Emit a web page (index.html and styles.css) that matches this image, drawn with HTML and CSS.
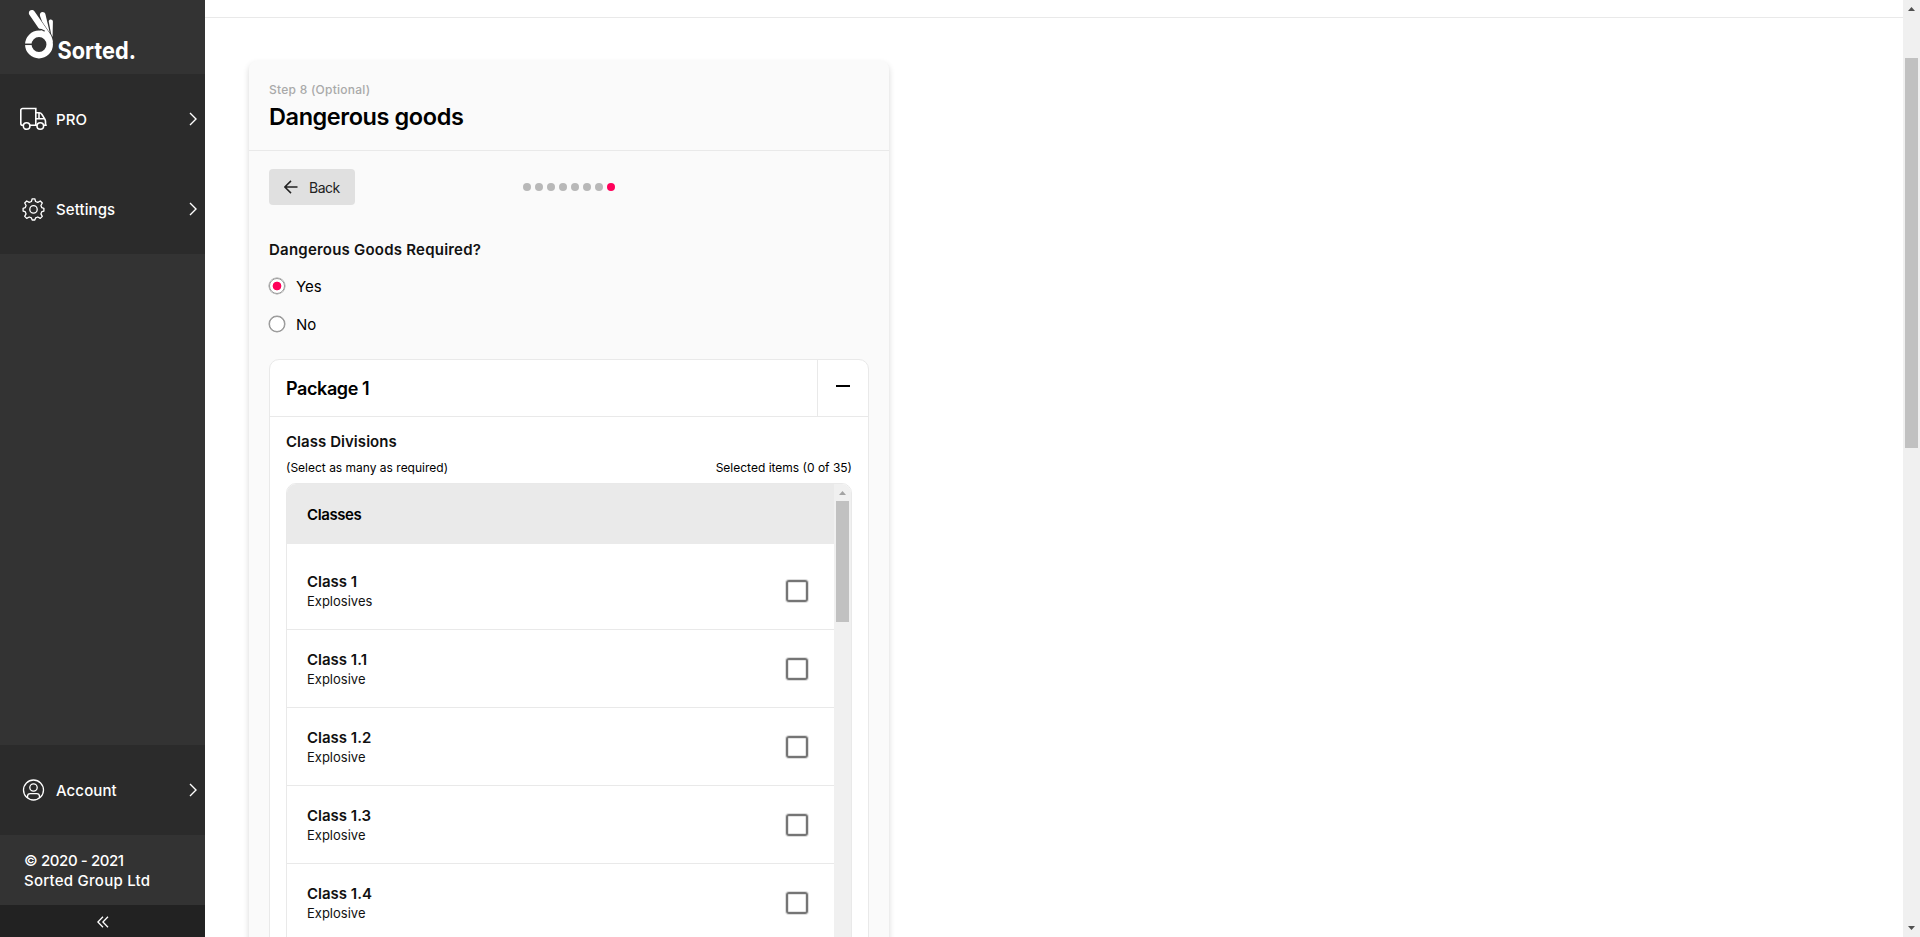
FILE: index.html
```html
<!DOCTYPE html>
<html lang="en">
<head>
    <meta charset="UTF-8">
    <title>Sorted - Dangerous goods</title>
    <link rel="stylesheet" href="styles.css">
</head>
<body>
    <nav class="sidebar">
        <div class="logo">
            <svg width="120" height="62" viewBox="0 0 120 62">
                <circle cx="15" cy="34.5" r="10.7" fill="none" stroke="#fff" stroke-width="6.5"/>
                <path d="M0 34.300h8" stroke="#333" stroke-width="1.500"/>
                <path d="M5.200 4.600C3.500 .8 8.200-1.800 10.600 1.600L25.500 23c2.300 3.200 3.200 6 3.300 9.500l-4.800-5.500-4-5.500c-2.600-.4-3.900-.9-5.200-3z" fill="#fff"/>
                <path d="M16 6c-1.200-4.400 4.500-5.500 5.500-1.500l4.300 18.300-7.600-11z" fill="#fff"/>
                <path d="M24.700 11.300c.2-2.600 4.300-2.500 4.200.2l-.3 15.500-1.600-3.500z" fill="#fff"/>
                <path d="M10.500 19.500c4-.9 7-.5 10.300 1.600" fill="none" stroke="#333" stroke-width="1.100"/>
                <text class="logo-text" x="33.500" y="48.800" textLength="78.500" lengthAdjust="spacingAndGlyphs">Sorted.</text>
            </svg>
        </div>
        <a class="nav-item">
            <svg class="nav-icon" width="28" height="24" viewBox="0 0 28 24">
                <g fill="none" stroke="#fff" stroke-width="1.600">
                    <path d="M3 18.200H2.600A1.800 1.800 0 0 1 .8 16.400V3.300A1.800 1.800 0 0 1 2.600 1.500h13.200v16.700H10M17 18.200h-1.200M16 5.800h3.200c1.200 0 2 .5 2.600 1.500l2.900 4.500c.6 1 .8 1.700.8 2.700v3.700h1.300M25.500 18.200H24M16 11.800h8.500M19 6v5.500"/>
                    <circle cx="6.600" cy="19" r="3.300"/>
                    <circle cx="20.300" cy="19" r="3.300"/>
                </g>
            </svg>
            <span class="nav-label">PRO</span>
            <svg class="chevron" width="8" height="14" viewBox="0 0 8 14"><path d="M1 1l6 6-6 6"/></svg>
        </a>
        <a class="nav-item">
            <svg class="nav-icon" width="28" height="24" viewBox="0 0 28 24">
                <g fill="none" stroke="#fff" stroke-width="1.300" stroke-linejoin="round">
                    <path d="M12.200 1.800h2.600l.8 2.700 2.200.9 2.500-1.400 2 2-1.400 2.500.9 2.200 2.100.6v2.800l-2.100.6-.9 2.200 1.400 2.500-2 2-2.500-1.400-2.200.9-.8 2.100h-2.600l-.8-2.100-2.200-.9-2.500 1.400-2-2 1.400-2.500-.9-2.200-2.100-.6v-2.800l2.100-.6.9-2.200-1.400-2.500 2-2 2.500 1.400 2.200-.9z"/>
                    <circle cx="13.500" cy="12.400" r="3.700"/>
                </g>
            </svg>
            <span class="nav-label">Settings</span>
            <svg class="chevron" width="8" height="14" viewBox="0 0 8 14"><path d="M1 1l6 6-6 6"/></svg>
        </a>
        <div class="sidebar-space"></div>
        <a class="nav-item">
            <svg class="nav-icon" width="28" height="24" viewBox="0 0 28 24">
                <g fill="none" stroke="#fff" stroke-width="1.300">
                    <circle cx="13.500" cy="12" r="10"/>
                    <circle cx="13.500" cy="9.500" r="3.700"/>
                    <path d="M7.500 19.700v-1.200a2.800 2.800 0 0 1 2.800-2.800h6.400a2.800 2.800 0 0 1 2.800 2.800v1.200"/>
                </g>
            </svg>
            <span class="nav-label">Account</span>
            <svg class="chevron" width="8" height="14" viewBox="0 0 8 14"><path d="M1 1l6 6-6 6"/></svg>
        </a>
        <div class="copyright">
            <span class="years">© 2020 - 2021</span>
            <span class="company">Sorted Group Ltd</span>
        </div>
        <div class="collapse">
            <svg width="12" height="12" viewBox="0 0 12 12"><path d="M6 .8L.9 6 6 11.200M11 .8L5.900 6l5.100 5.200" fill="none" stroke="#fff" stroke-width="1.300"/></svg>
        </div>
    </nav>

    <main class="main">
        <div class="topbar"></div>
        <section class="card">
            <header class="card-header">
                <div class="step">Step 8 (Optional)</div>
                <h1>Dangerous goods</h1>
            </header>
            <div class="card-body">
                <div class="controls">
                    <button class="back">
                        <svg width="14" height="14" viewBox="0 0 14 14"><path d="M13.500 7H1M7 .9L.9 7 7 13.100" fill="none" stroke="#222" stroke-width="1.500"/></svg>
                        <span>Back</span>
                    </button>
                    <div class="dots">
                        <i></i><i></i><i></i><i></i><i></i><i></i><i></i><i class="active"></i>
                    </div>
                </div>

                <h3 class="question">Dangerous Goods Required?</h3>
                <label class="radio"><span class="circle checked"></span>Yes</label>
                <label class="radio"><span class="circle"></span>No</label>

                <div class="package">
                    <div class="package-header">
                        <h2>Package 1</h2>
                        <div class="toggle"><span class="minus"></span></div>
                    </div>
                    <div class="package-body">
                        <h3 class="divisions">Class Divisions</h3>
                        <div class="hints">
                            <span class="hint">(Select as many as required)</span>
                            <span class="selected">Selected items (0 of 35)</span>
                        </div>
                        <div class="list">
                            <div class="list-content">
                                <div class="list-header">Classes</div>
                                <div class="row"><div><div class="name">Class 1</div><div class="desc">Explosives</div></div><span class="checkbox"></span></div>
                                <div class="row"><div><div class="name">Class 1.1</div><div class="desc">Explosive</div></div><span class="checkbox"></span></div>
                                <div class="row"><div><div class="name">Class 1.2</div><div class="desc">Explosive</div></div><span class="checkbox"></span></div>
                                <div class="row"><div><div class="name">Class 1.3</div><div class="desc">Explosive</div></div><span class="checkbox"></span></div>
                                <div class="row"><div><div class="name">Class 1.4</div><div class="desc">Explosive</div></div><span class="checkbox"></span></div>
                            </div>
                            <div class="list-scroll">
                                <svg width="17" height="17" viewBox="0 0 17 17"><path d="M5 11l3.500-4 3.500 4z" fill="#a3a3a3"/></svg>
                                <div class="list-thumb"></div>
                            </div>
                        </div>
                    </div>
                </div>
            </div>
        </section>
    </main>

    <div class="page-scroll">
        <svg width="17" height="17" viewBox="0 0 17 17"><path d="M5 11l3.500-4 3.500 4z" fill="#505050"/></svg>
        <div class="page-thumb"></div>
        <svg class="scroll-down" width="17" height="17" viewBox="0 0 17 17"><path d="M5 6l3.500 4L12 6z" fill="#505050"/></svg>
    </div>
</body>
</html>
```
FILE: styles.css
```css
* {
    box-sizing: border-box;
}

body {
    font-family: Inter, "Liberation Sans", sans-serif;
    margin: 0;
    height: 100vh;
    display: flex;
    overflow: hidden;
    background-color: #fff;
    color: #000;
}

h1, h2, h3 {
    margin: 0;
}

/* Sidebar */
.sidebar {
    width: 205px;
    height: 937px;
    flex-shrink: 0;
    display: flex;
    flex-direction: column;
    background-color: #333;
    color: #fff;
}

.logo {
    height: 74px;
    padding: 10px 0 0 24px;
}

.logo-text {
    font-size: 24px;
    font-weight: 700;
    fill: #fff;
}

.nav-item {
    height: 90px;
    display: flex;
    align-items: center;
    padding: 0 8px 0 20px;
    background-color: #2b2b2b;
    font-size: 15px;
    font-weight: 500;
    letter-spacing: 0.1px;
}

.nav-icon {
    margin-right: 8px;
}

.chevron {
    margin-left: auto;
    fill: none;
    stroke: #fff;
    stroke-width: 1.4;
}

.sidebar-space {
    flex: 1;
}

.copyright {
    height: 70px;
    padding: 16px 0 0 24px;
    display: flex;
    flex-direction: column;
    font-size: 15px;
    font-weight: 500;
    line-height: 20px;
}

.years {
    letter-spacing: -0.4px;
}

.company {
    letter-spacing: 0.25px;
}

.collapse {
    height: 32px;
    display: flex;
    align-items: center;
    justify-content: center;
    padding-top: 2px;
    background-color: #222;
}

/* Main area */
.main {
    flex: 1;
    height: 937px;
    overflow: hidden;
}

.topbar {
    height: 18px;
    border-bottom: 1px solid #e9e9e9;
}

.card {
    width: 640px;
    height: 1100px;
    margin: 43px 0 0 44px;
    background-color: #fafafa;
    border-radius: 8px;
    box-shadow: 0 3px 6px rgba(0, 0, 0, 0.16);
}

.card-header {
    height: 90px;
    padding: 20px 20px 0;
    border-bottom: 1px solid #e9e9e9;
}

.step {
    font-size: 12px;
    line-height: 18px;
    font-weight: 500;
    letter-spacing: 0.25px;
    color: #a9a9a9;
}

h1 {
    font-size: 23.5px;
    line-height: 35px;
    font-weight: 600;
    letter-spacing: -0.42px;
}

.card-body {
    padding: 18px 20px;
}

.controls {
    display: flex;
    align-items: center;
}

.back {
    width: 86px;
    height: 36px;
    display: flex;
    align-items: center;
    gap: 11px;
    padding: 0 0 0 15px;
    border: none;
    border-radius: 4px;
    background-color: #e0e0e0;
    font-family: inherit;
    font-size: 14px;
    letter-spacing: -0.5px;
    color: #222;
}

.dots {
    display: flex;
    gap: 4px;
    margin-left: 168px;
}

.dots i {
    width: 8px;
    height: 8px;
    border-radius: 50%;
    background-color: #b8b8b8;
}

.dots .active {
    background-color: #ff005a;
}

.question {
    margin: 35px 0 7px;
    font-size: 15px;
    line-height: 20px;
    font-weight: 600;
    letter-spacing: 0.22px;
    color: #111;
}

.radio {
    height: 38px;
    display: flex;
    align-items: center;
    gap: 11px;
    font-size: 15px;
}

.circle {
    width: 16px;
    height: 16px;
    border: 1px solid #999;
    border-radius: 50%;
    box-shadow: 0 0 0 0.5px #999;
    background-color: #fff;
}

.checked {
    background: radial-gradient(circle, #ff005a 4px, #fff 4.7px);
}

/* Package panel */
.package {
    width: 600px;
    margin-top: 16px;
    border: 1px solid #e9e9e9;
    border-radius: 10px;
    background-color: #fff;
}

.package-header {
    height: 57px;
    display: flex;
    border-bottom: 1px solid #e9e9e9;
}

h2 {
    flex: 1;
    padding-left: 16px;
    font-size: 18px;
    line-height: 58px;
    font-weight: 600;
    letter-spacing: -0.4px;
}

.toggle {
    width: 51px;
    padding: 25px 0 0 18px;
    border-left: 1px solid #e9e9e9;
}

.minus {
    display: block;
    width: 14px;
    height: 2px;
    background-color: #000;
}

.package-body {
    padding: 14px 16px;
}

.divisions {
    font-size: 15px;
    line-height: 22px;
    font-weight: 600;
    letter-spacing: 0.05px;
    color: #111;
}

.hints {
    display: flex;
    justify-content: space-between;
    height: 30px;
    font-size: 12px;
    line-height: 30px;
}

.list {
    display: flex;
    width: 566px;
    height: 600px;
    border: 1px solid #e9e9e9;
    border-radius: 10px;
    overflow: hidden;
}

.list-content {
    flex: 1;
}

.list-header {
    height: 60px;
    padding-left: 20px;
    margin-bottom: 8px;
    background-color: #eaeaea;
    font-size: 15px;
    font-weight: 600;
    line-height: 62px;
    letter-spacing: -0.4px;
}

.row {
    height: 78px;
    display: flex;
    align-items: center;
    justify-content: space-between;
    padding: 0 26px 0 20px;
    border-bottom: 1px solid #e9e9e9;
    color: #111;
}

.name {
    padding-top: 2px;
    font-size: 15px;
    line-height: 20px;
    font-weight: 600;
}

.desc {
    font-size: 13px;
    line-height: 19px;
}

.checkbox {
    width: 22px;
    height: 22px;
    border: 2px solid #757575;
    border-radius: 3px;
    box-shadow: 0 0 0 1px #ddd, inset 0 0 0 1px #e4e4e4;
}

.list-scroll {
    width: 17px;
    background-color: #f0f0f0;
}

.list-scroll svg,
.page-scroll svg {
    display: block;
}

.list-thumb {
    width: 13px;
    height: 121px;
    margin-left: 2px;
    background-color: #c1c1c1;
}

/* Page scrollbar */
.page-scroll {
    width: 17px;
    height: 937px;
    display: flex;
    flex-direction: column;
    background-color: #f0f0f0;
}

.page-thumb {
    width: 13px;
    height: 390px;
    margin: 41px 0 0 2px;
    background-color: #c1c1c1;
}

.scroll-down {
    margin-top: auto;
}
```
